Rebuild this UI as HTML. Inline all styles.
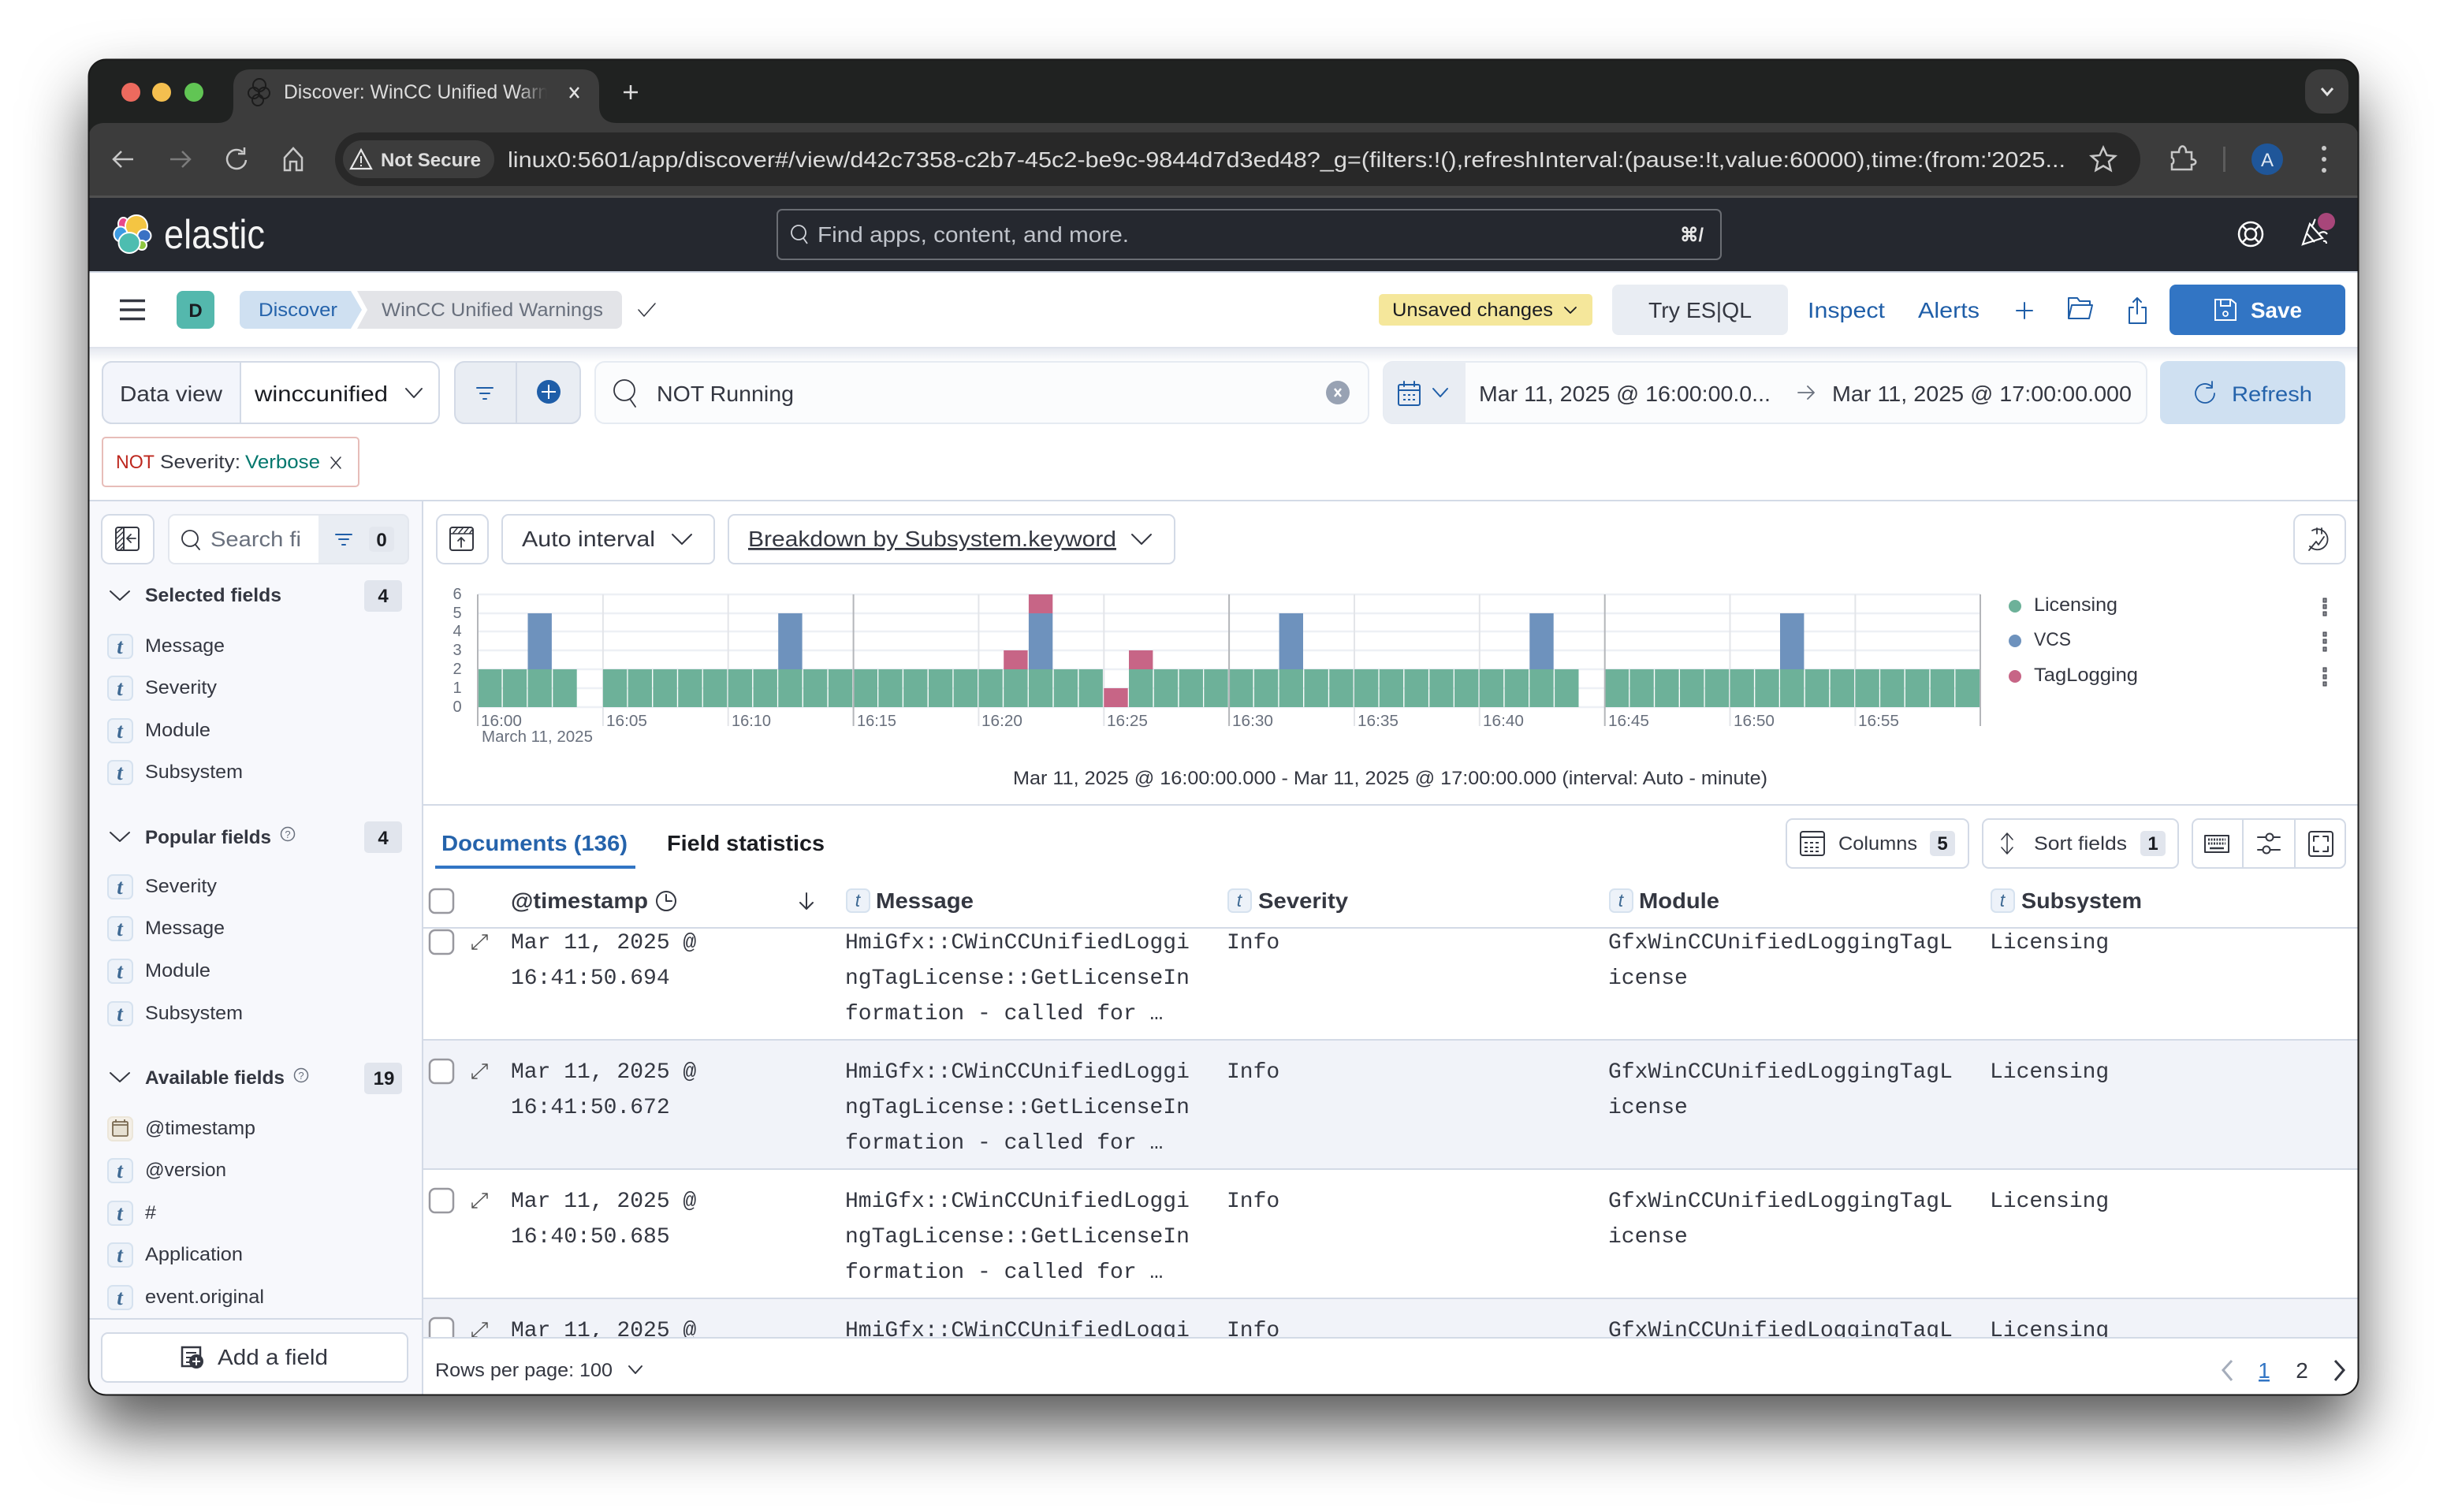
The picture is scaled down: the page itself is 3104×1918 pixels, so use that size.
<!DOCTYPE html>
<html><head><meta charset="utf-8"><title>Discover: WinCC Unified Warnings</title>
<style>
html,body{margin:0;padding:0;background:#fff;width:3104px;height:1918px;overflow:hidden}
#w{position:absolute;left:112px;top:75px;width:2880px;height:1695px;border-radius:22px;box-shadow:0 44px 80px rgba(0,0,0,.65);background:#000}
svg{position:absolute;left:0;top:0}
text{font-family:"Liberation Sans",sans-serif;fill:#343741;font-size:24px}
.m{font-family:"Liberation Mono",monospace;font-size:28px;fill:#343741}
.b{font-weight:700}
.tt{font-family:"Liberation Serif",serif;font-weight:700;font-style:italic;font-size:27px;fill:#3f6a94;text-anchor:middle}
.th{font-family:"Liberation Sans",sans-serif;font-style:italic;font-size:23px;fill:#3f6a94;text-anchor:middle}
.tb{fill:#edf2f9;stroke:#d6e2ef;stroke-width:2}
.ic{fill:none;stroke:#343741;stroke-width:2;stroke-linecap:round;stroke-linejoin:round}
.bl{fill:none;stroke:#1f5ea8;stroke-width:2;stroke-linecap:round;stroke-linejoin:round}
.s15{stroke-width:1.5}
.s18{stroke-width:1.8}
.gr{stroke:#555}
.cb{fill:#fff;stroke:#98989f;stroke-width:2.5}
.btn{fill:#fff;stroke:#d3dae6;stroke-width:2}
</style></head><body>
<div id="w"></div>
<svg width="3104" height="1918" viewBox="0 0 3104 1918" xmlns="http://www.w3.org/2000/svg">
<defs>
<clipPath id="win"><rect x="112" y="75" width="2880" height="1695" rx="22"/></clipPath>
<clipPath id="row4"><rect x="537" y="1648" width="2460" height="49"/></clipPath>
<linearGradient id="sh" x1="0" y1="0" x2="0" y2="1"><stop offset="0" stop-color="#e6e9f0"/><stop offset="1" stop-color="#fff"/></linearGradient>
<linearGradient id="fade" x1="0" y1="0" x2="1" y2="0"><stop offset="0" stop-color="#3c3c3c" stop-opacity="0"/><stop offset="1" stop-color="#3c3c3c"/></linearGradient>
</defs>
<g clip-path="url(#win)">
<rect x="112" y="75" width="2880" height="1695" fill="#fff"/>
<!-- tab strip -->
<rect x="112" y="75" width="2880" height="130" fill="#202221"/>
<path d="M276 156c14 0 20-8 20-22v-24c0-14 8-22 22-22h420c14 0 22 8 22 22v24c0 14 8 22 22 22z" fill="#3c3c3c"/>
<circle cx="166" cy="117" r="12" fill="#ec6a5e"/><circle cx="205" cy="117" r="12" fill="#f4bf4f"/><circle cx="246" cy="117" r="12" fill="#61c554"/>
<g fill="none" stroke="#1c1c1c" stroke-width="2"><circle cx="329" cy="108" r="8"/><circle cx="322" cy="118" r="7"/><circle cx="335" cy="118" r="7"/><circle cx="327" cy="127" r="7"/></g>
<text x="360" y="125" textLength="336" lengthAdjust="spacingAndGlyphs" style="fill:#dcdcdc;font-size:25px">Discover: WinCC Unified Warn</text>
<rect x="656" y="95" width="38" height="45" fill="url(#fade)"/><rect x="694" y="95" width="24" height="45" fill="#3c3c3c"/>
<path d="M723 111l11 13M734 111l-11 13" stroke="#e3e3e3" stroke-width="2.500" fill="none"/>
<path d="M800 108v18M791 117h18" stroke="#dcdcdc" stroke-width="2.500" fill="none"/>
<rect x="2924" y="88" width="55" height="56" rx="20" fill="#3c3c3c"/>
<path d="M2945 112l7 8 7-8" stroke="#e3e3e3" stroke-width="3" fill="none"/>
<!-- toolbar -->
<path d="M112 248v-72c0-12 8-20 20-20h2840c12 0 20 8 20 20v72z" fill="#3c3c3c"/>
<rect x="112" y="248" width="2880" height="3" fill="#505050"/>
<path d="M169 202h-25M154 192l-10 10 10 10" fill="none" stroke="#c8c8c8" stroke-width="2.500"/>
<path d="M216 202h25M231 192l10 10-10 10" fill="none" stroke="#7c7c7c" stroke-width="2.500"/>
<path d="M308 193a12 12 0 1 0 4 10M310 187v8h-8" fill="none" stroke="#c8c8c8" stroke-width="2.500"/>
<path d="M361 216v-16l11-12 11 12v16h-7v-11h-8v11z" fill="none" stroke="#c8c8c8" stroke-width="2.500"/>
<rect x="425" y="168" width="2290" height="68" rx="34" fill="#282828"/>
<rect x="435" y="178" width="192" height="48" rx="24" fill="#3c3c3c"/>
<path d="M458 190l13 24h-26z" fill="none" stroke="#e8e8e8" stroke-width="2.200"/><path d="M458 198v9M458 209v2" stroke="#e8e8e8" stroke-width="2"/>
<text x="483" y="211" class="b" textLength="127" lengthAdjust="spacingAndGlyphs" style="fill:#dedede">Not Secure</text>
<text x="644" y="212" textLength="1976" lengthAdjust="spacingAndGlyphs" style="fill:#dcdcdc;font-size:28px">linux0:5601/app/discover#/view/d42c7358-c2b7-45c2-be9c-9844d7d3ed48?_g=(filters:!(),refreshInterval:(pause:!t,value:60000),time:(from:'2025...</text>
<path d="M2668 187l4.500 10 10.500 1-8 7 2.500 11-9.500-5.500-9.500 5.500 2.500-11-8-7 10.500-1z" fill="none" stroke="#c8c8c8" stroke-width="2.500"/>
<path d="M2755 193h9c0-10 9-10 9 0h7v9c7 0 7 7 0 7v6h-25v-7c3-1 3-7 0-8z" fill="none" stroke="#c8c8c8" stroke-width="2.500"/>
<rect x="2820" y="186" width="3" height="32" fill="#5c5c5c"/>
<circle cx="2876" cy="202" r="20" fill="#1f5699"/>
<text x="2876" y="211" text-anchor="middle" style="fill:#dfe8f3;font-size:24px">A</text>
<circle cx="2948" cy="188" r="3" fill="#c8c8c8"/><circle cx="2948" cy="202" r="3" fill="#c8c8c8"/><circle cx="2948" cy="216" r="3" fill="#c8c8c8"/>
<!-- elastic header -->
<rect x="112" y="251" width="2880" height="93" fill="#25282f"/>
<rect x="112" y="344" width="2880" height="2" fill="#d3dae6"/>
<g stroke="#fff" stroke-width="2">
<ellipse cx="156.500" cy="284" rx="6.500" ry="8" fill="#e8488b"/>
<ellipse cx="173" cy="287" rx="14" ry="14" fill="#f4c542"/>
<ellipse cx="153" cy="297" rx="8.500" ry="9.500" fill="#3d9be3"/>
<ellipse cx="183" cy="299" rx="8.500" ry="8" fill="#3a72c4"/>
<ellipse cx="180" cy="311" rx="6" ry="6" fill="#8fc640"/>
<ellipse cx="164" cy="308" rx="13.500" ry="13" fill="#4dbdb0"/>
</g>
<text x="208" y="315" textLength="128" lengthAdjust="spacingAndGlyphs" style="fill:#f4f4f4;font-size:52px">elastic</text>
<rect x="986" y="266" width="1197" height="63" rx="6" fill="#25282f" stroke="#6a6d73" stroke-width="2"/>
<circle cx="1013" cy="295" r="9" fill="none" stroke="#d0d3d9" stroke-width="1.800"/><path d="M1019 302l5 7" stroke="#d0d3d9" stroke-width="1.800"/>
<text x="1037" y="307" textLength="395" lengthAdjust="spacingAndGlyphs" style="fill:#bfc3ca;font-size:28px">Find apps, content, and more.</text>
<text x="2131" y="306" textLength="30" lengthAdjust="spacingAndGlyphs" style="fill:#e8e8e8;font-size:24px" class="b">⌘/</text>
<g fill="none" stroke="#fff" stroke-width="2.500"><circle cx="2855" cy="297" r="15"/><circle cx="2855" cy="297" r="7"/><path d="M2845 287l5 5M2865 287l-5 5M2845 307l5-5M2865 307l-5-5"/></g>
<g fill="none" stroke="#fff" stroke-width="2.200"><path d="M2921 310l9-26 16 18z"/><path d="M2926 296l10 11M2933 286c3-3 2-6 4-8M2942 296c5-3 8-2 10 1M2947 306c3-1 4 1 4 3"/></g>
<circle cx="2951" cy="281" r="11" fill="#a8467a"/>
<!-- breadcrumb bar -->
<rect x="112" y="346" width="2880" height="94" fill="#fff"/>
<rect x="112" y="440" width="2880" height="2" fill="#dfe3ec"/>
<rect x="112" y="442" width="2880" height="18" fill="url(#sh)"/>
<path d="M152 381.500h32M152 393h32M152 404.500h32" stroke="#343741" stroke-width="3.500"/>
<rect x="224" y="369" width="48" height="48" rx="8" fill="#54b8ad"/>
<text x="248" y="402" text-anchor="middle" class="b" style="fill:#1a1c21;font-size:24px">D</text>
<path d="M312 369h133l14 24-14 24h-133a8 8 0 0 1-8-8v-32a8 8 0 0 1 8-8z" fill="#cfe0f1"/>
<text x="328" y="401" textLength="100" lengthAdjust="spacingAndGlyphs" style="fill:#2563ab;font-size:24px">Discover</text>
<path d="M453 369h328a8 8 0 0 1 8 8v32a8 8 0 0 1-8 8h-328l13-24z" fill="#e3e4e8"/>
<text x="484" y="401" textLength="281" lengthAdjust="spacingAndGlyphs" style="fill:#69707d;font-size:24px">WinCC Unified Warnings</text>
<path d="M810 393l7 8 14-16" class="ic s15"/>
<rect x="1749" y="373" width="271" height="40" rx="5" fill="#f5e79b"/>
<text x="1766" y="401" textLength="204" lengthAdjust="spacingAndGlyphs" style="fill:#1a1c21;font-size:24px">Unsaved changes</text>
<path d="M1985 390l7 7 7-7" class="ic s18" style="stroke:#1a1c21"/>
<rect x="2045" y="361" width="223" height="64" rx="8" fill="#e9edf3"/>
<text x="2091" y="403" textLength="131" lengthAdjust="spacingAndGlyphs" style="font-size:28px">Try ES|QL</text>
<text x="2293" y="403" textLength="98" lengthAdjust="spacingAndGlyphs" style="fill:#1f5ea8;font-size:28px">Inspect</text>
<text x="2433" y="403" textLength="78" lengthAdjust="spacingAndGlyphs" style="fill:#1f5ea8;font-size:28px">Alerts</text>
<path d="M2568 384v20M2558 394h20" class="bl"/>
<path d="M2624 404v-26h11l3 4h13v5M2624 404l4-17h26l-4 17z" class="bl"/>
<path d="M2711 378v20M2706 383l5-5 5 5M2706 390h-5v20h21v-20h-5" class="bl"/>
<rect x="2752" y="361" width="223" height="64" rx="8" fill="#3275c4"/>
<path d="M2810 380h20l6 5v21h-26zM2817 380v8h12v-8" fill="none" stroke="#fff" stroke-width="2"/><circle cx="2823" cy="398" r="3" fill="none" stroke="#fff" stroke-width="1.800"/>
<text x="2855" y="403" class="b" textLength="65" lengthAdjust="spacingAndGlyphs" style="fill:#fff;font-size:28px">Save</text>
<!-- search row -->
<rect x="130" y="459" width="427" height="78" rx="12" class="btn"/>
<path d="M142 459h163v78h-163a12 12 0 0 1-12-12v-54a12 12 0 0 1 12-12z" fill="#f3f5fb" stroke="#d3dae6" stroke-width="2"/>
<text x="152" y="509" textLength="130" lengthAdjust="spacingAndGlyphs" style="font-size:28px">Data view</text>
<text x="323" y="509" textLength="169" lengthAdjust="spacingAndGlyphs" style="fill:#1a1c21;font-size:28px">winccunified</text>
<path d="M515 493l10 11 10-11" class="ic"/>
<rect x="577" y="459" width="159" height="78" rx="12" fill="#e9edf3" stroke="#d3dae6" stroke-width="2"/>
<rect x="654" y="459" width="2" height="78" fill="#d3dae6"/>
<path d="M605 492h20M609 499h12M613 506h4" class="bl"/>
<circle cx="696" cy="497" r="15" fill="#1f5ea8"/><path d="M696 488v18M687 497h18" stroke="#fff" stroke-width="2"/>
<rect x="755" y="459" width="981" height="78" rx="12" fill="#fbfcfd" stroke="#e6ebf2" stroke-width="2"/>
<circle cx="792" cy="495" r="13" fill="none" stroke="#343741" stroke-width="1.800"/><path d="M799 506l7 10" class="ic s18"/>
<text x="833" y="509" textLength="174" lengthAdjust="spacingAndGlyphs" style="font-size:28px">NOT Running</text>
<circle cx="1697" cy="498" r="15" fill="#98a2b3"/><path d="M1693 493l8 10M1701 493l-8 10" stroke="#fff" stroke-width="2.500"/>
<rect x="1755" y="459" width="968" height="78" rx="12" fill="#fbfcfd" stroke="#e6ebf2" stroke-width="2"/>
<path d="M1767 459h92v78h-92a12 12 0 0 1-12-12v-54a12 12 0 0 1 12-12z" fill="#e9edf3"/>
<rect x="1774" y="488" width="27" height="26" rx="2" class="bl"/><path d="M1774 495h27M1781 484v6M1794 484v6" class="bl"/><path d="M1780 501h15M1780 507h15" class="bl" stroke-dasharray="3 3" style="stroke-linecap:butt"/>
<path d="M1818 493l9 10 9-10" class="bl"/>
<text x="1876" y="509" textLength="370" lengthAdjust="spacingAndGlyphs" style="font-size:28px">Mar 11, 2025 @ 16:00:00.0...</text>
<path d="M2281 498h20M2293 490l8 8-8 8" class="ic s18" style="stroke:#69707d"/>
<text x="2324" y="509" textLength="380" lengthAdjust="spacingAndGlyphs" style="font-size:28px">Mar 11, 2025 @ 17:00:00.000</text>
<rect x="2740" y="458" width="235" height="80" rx="10" fill="#cfe0f1"/>
<path d="M2805 490a12 12 0 1 0 4 9M2806 484v8h-7" class="bl s18"/>
<text x="2831" y="509" textLength="102" lengthAdjust="spacingAndGlyphs" style="fill:#2563ab;font-size:27px">Refresh</text>
<!-- filter pill -->
<rect x="130" y="555" width="325" height="62" rx="4" fill="#fff" stroke="#e7bdb9" stroke-width="2"/>
<text x="147" y="594" textLength="49" lengthAdjust="spacingAndGlyphs" style="fill:#bd271e">NOT</text>
<text x="203" y="594" textLength="102" lengthAdjust="spacingAndGlyphs">Severity:</text>
<text x="311" y="594" textLength="95" lengthAdjust="spacingAndGlyphs" style="fill:#01776d">Verbose</text>
<path d="M420 580l12 14M432 580l-12 14" class="ic s15"/>
<rect x="112" y="634" width="2880" height="2" fill="#d3dae6"/>
<!-- sidebar -->
<rect x="112" y="636" width="423" height="1134" fill="#f7f8fc"/>
<rect x="535" y="636" width="2" height="1134" fill="#d3dae6"/>
<rect x="129" y="653" width="66" height="62" rx="10" class="btn"/>
<rect x="147" y="669" width="29" height="29" rx="3" class="ic"/><path d="M157 669v29" class="ic"/><path d="M148 676l8-7M148 683l9-9M148 690l9-9M148 697l9-9M152 698l5-5" class="ic s15"/><path d="M172 683h-11M166 678l-5 5 5 5" class="ic s18"/>
<rect x="214" y="653" width="304" height="62" rx="8" fill="#e9edf3" stroke="#e3e7ee" stroke-width="2"/>
<path d="M404 654h-182a7 7 0 0 0-7 7v46a7 7 0 0 0 7 7h182z" fill="#fff"/>
<circle cx="241" cy="683" r="10" fill="none" stroke="#343741" stroke-width="1.800"/><path d="M248 691l5 6" class="ic s18"/>
<text x="267" y="693" textLength="115" lengthAdjust="spacingAndGlyphs" style="fill:#69707d;font-size:27px">Search fi</text>
<path d="M426 678h20M430 684h12M434 691h4" class="bl"/>
<rect x="468" y="668" width="32" height="32" rx="5" fill="#e3e7ee"/>
<text x="484" y="693" text-anchor="middle" class="b" style="fill:#1a1c21">0</text>
<!-- selected -->
<path d="M140 750l12 11 12-11" class="ic"/>
<text x="184" y="763" class="b" textLength="173" lengthAdjust="spacingAndGlyphs">Selected fields</text>
<rect x="462" y="736" width="48" height="40" rx="5" fill="#e1e5ed"/><text x="486" y="764" text-anchor="middle" class="b" style="fill:#1a1c21">4</text>
<rect x="137" y="805" width="31" height="30" rx="6" class="tb"/><text x="152" y="829" class="tt">t</text><text x="184" y="827" textLength="101" lengthAdjust="spacingAndGlyphs">Message</text>
<rect x="137" y="858" width="31" height="30" rx="6" class="tb"/><text x="152" y="882" class="tt">t</text><text x="184" y="880" textLength="91" lengthAdjust="spacingAndGlyphs">Severity</text>
<rect x="137" y="912" width="31" height="30" rx="6" class="tb"/><text x="152" y="936" class="tt">t</text><text x="184" y="934" textLength="83" lengthAdjust="spacingAndGlyphs">Module</text>
<rect x="137" y="965" width="31" height="30" rx="6" class="tb"/><text x="152" y="989" class="tt">t</text><text x="184" y="987" textLength="124" lengthAdjust="spacingAndGlyphs">Subsystem</text>
<!-- popular -->
<path d="M140 1056l12 11 12-11" class="ic"/>
<text x="184" y="1070" class="b" textLength="160" lengthAdjust="spacingAndGlyphs">Popular fields</text>
<circle cx="365" cy="1058" r="8.500" fill="none" stroke="#69707d" stroke-width="1.500"/><text x="365" y="1063" text-anchor="middle" style="fill:#69707d;font-size:13px">?</text>
<rect x="462" y="1042" width="48" height="40" rx="5" fill="#e1e5ed"/><text x="486" y="1071" text-anchor="middle" class="b" style="fill:#1a1c21">4</text>
<rect x="137" y="1110" width="31" height="30" rx="6" class="tb"/><text x="152" y="1134" class="tt">t</text><text x="184" y="1132" textLength="91" lengthAdjust="spacingAndGlyphs">Severity</text>
<rect x="137" y="1163" width="31" height="30" rx="6" class="tb"/><text x="152" y="1187" class="tt">t</text><text x="184" y="1185" textLength="101" lengthAdjust="spacingAndGlyphs">Message</text>
<rect x="137" y="1217" width="31" height="30" rx="6" class="tb"/><text x="152" y="1241" class="tt">t</text><text x="184" y="1239" textLength="83" lengthAdjust="spacingAndGlyphs">Module</text>
<rect x="137" y="1271" width="31" height="30" rx="6" class="tb"/><text x="152" y="1295" class="tt">t</text><text x="184" y="1293" textLength="124" lengthAdjust="spacingAndGlyphs">Subsystem</text>
<!-- available -->
<path d="M140 1361l12 11 12-11" class="ic"/>
<text x="184" y="1375" class="b" textLength="177" lengthAdjust="spacingAndGlyphs">Available fields</text>
<circle cx="382" cy="1364" r="8.500" fill="none" stroke="#69707d" stroke-width="1.500"/><text x="382" y="1369" text-anchor="middle" style="fill:#69707d;font-size:13px">?</text>
<rect x="462" y="1348" width="48" height="40" rx="5" fill="#e1e5ed"/><text x="487" y="1376" text-anchor="middle" class="b" style="fill:#1a1c21">19</text>
<rect x="137" y="1417" width="31" height="30" rx="6" fill="#f4efe6" stroke="#ece6d9" stroke-width="2"/>
<rect x="143" y="1423" width="19" height="18" rx="1.500" fill="#e6e0d2" stroke="#7a6a52" stroke-width="1.800"/><path d="M143 1427h19M147 1420v4M158 1420v4" stroke="#7a6a52" stroke-width="1.800"/>
<text x="184" y="1439" textLength="140" lengthAdjust="spacingAndGlyphs">@timestamp</text>
<rect x="137" y="1470" width="31" height="30" rx="6" class="tb"/><text x="152" y="1494" class="tt">t</text><text x="184" y="1492" textLength="103" lengthAdjust="spacingAndGlyphs">@version</text>
<rect x="137" y="1524" width="31" height="30" rx="6" class="tb"/><text x="152" y="1548" class="tt">t</text><text x="184" y="1546" textLength="14" lengthAdjust="spacingAndGlyphs">#</text>
<rect x="137" y="1577" width="31" height="30" rx="6" class="tb"/><text x="152" y="1601" class="tt">t</text><text x="184" y="1599" textLength="124" lengthAdjust="spacingAndGlyphs">Application</text>
<rect x="137" y="1631" width="31" height="30" rx="6" class="tb"/><text x="152" y="1655" class="tt">t</text><text x="184" y="1653" textLength="151" lengthAdjust="spacingAndGlyphs">event.original</text>
<rect x="112" y="1672" width="423" height="2" fill="#d3dae6"/>
<rect x="129" y="1691" width="388" height="62" rx="8" class="btn"/>
<rect x="231" y="1709" width="23" height="24" fill="none" stroke="#343741" stroke-width="2.500"/><path d="M236 1716h13M236 1722h9M236 1728h5" stroke="#343741" stroke-width="2"/>
<circle cx="249" cy="1727" r="9" fill="#343741"/><path d="M249 1722v10M244 1727h10" stroke="#fff" stroke-width="2"/>
<text x="276" y="1731" textLength="140" lengthAdjust="spacingAndGlyphs" style="font-size:28px">Add a field</text>
<!-- chart controls -->
<rect x="554" y="653" width="65" height="62" rx="10" class="btn"/>
<rect x="571" y="669" width="29" height="29" rx="3" class="ic"/><path d="M571 677h29M575 676l5-6M582 676l5-6M589 676l5-6M596 676l3-4" class="ic s15"/><path d="M585 694v-12M581 686l4-4 4 4" class="ic s18"/>
<rect x="637" y="653" width="269" height="62" rx="8" class="btn"/>
<text x="662" y="693" textLength="169" lengthAdjust="spacingAndGlyphs" style="font-size:28px">Auto interval</text>
<path d="M853 678l12 12 12-12" class="ic"/>
<rect x="924" y="653" width="566" height="62" rx="8" class="btn"/>
<text x="949" y="693" textLength="467" lengthAdjust="spacingAndGlyphs" text-decoration="underline" style="font-size:28px">Breakdown by Subsystem.keyword</text>
<path d="M1436 678l12 12 12-12" class="ic"/>
<rect x="2910" y="653" width="65" height="62" rx="10" class="btn"/>
<path d="M2933 673a13 13 0 1 1 -3 20M2939 670v7M2945 670v7" class="ic s18"/><path d="M2929 698l9-11 3 4 7-10" class="ic s18"/>
<!-- chart grid -->
<g stroke="#edf0f5" stroke-width="2.500"><path d="M606 754H2512M606 778H2512M606 801H2512M606 825H2512M606 849H2512M606 873H2512M606 897H2512"/></g>
<g stroke="#e3e5e9" stroke-width="2"><path d="M764.900 754V921M923.700 754V921M1241.400 754V921M1400.300 754V921M1718 754V921M1876.800 754V921M2194.500 754V921M2353.400 754V921"/></g>
<g fill="#6db199"><path d="M606 849h30.400v48h-30.400zM637.800 849h30.400v48h-30.400zM669.500 849h30.400v48h-30.400zM701.300 849h30.400v48h-30.400zM764.900 849h30.400v48h-30.400zM796.600 849h30.400v48h-30.400zM828.400 849h30.400v48h-30.400zM860.200 849h30.400v48h-30.400zM891.900 849h30.400v48h-30.400zM923.700 849h30.400v48h-30.400zM955.500 849h30.400v48h-30.400zM987.200 849h30.400v48h-30.400zM1019 849h30.400v48h-30.400zM1050.800 849h30.400v48h-30.400zM1082.600 849h30.400v48h-30.400zM1114.300 849h30.400v48h-30.400zM1146.100 849h30.400v48h-30.400zM1177.900 849h30.400v48h-30.400zM1209.600 849h30.400v48h-30.400zM1241.400 849h30.400v48h-30.400zM1273.200 849h30.400v48h-30.400zM1304.900 849h30.400v48h-30.400zM1336.700 849h30.400v48h-30.400zM1368.500 849h30.400v48h-30.400zM1432 849h30.400v48h-30.400zM1463.800 849h30.400v48h-30.400zM1495.600 849h30.400v48h-30.400zM1527.300 849h30.400v48h-30.400zM1559.100 849h30.400v48h-30.400zM1590.900 849h30.400v48h-30.400zM1622.600 849h30.400v48h-30.400zM1654.400 849h30.400v48h-30.400zM1686.200 849h30.400v48h-30.400zM1718 849h30.400v48h-30.400zM1749.700 849h30.400v48h-30.400zM1781.500 849h30.400v48h-30.400zM1813.300 849h30.400v48h-30.400zM1845 849h30.400v48h-30.400zM1876.800 849h30.400v48h-30.400zM1908.600 849h30.400v48h-30.400zM1940.300 849h30.400v48h-30.400zM1972.100 849h30.400v48h-30.400zM2035.700 849h30.400v48h-30.400zM2067.400 849h30.400v48h-30.400zM2099.200 849h30.400v48h-30.400zM2131 849h30.400v48h-30.400zM2162.700 849h30.400v48h-30.400zM2194.500 849h30.400v48h-30.400zM2226.300 849h30.400v48h-30.400zM2258 849h30.400v48h-30.400zM2289.800 849h30.400v48h-30.400zM2321.600 849h30.400v48h-30.400zM2353.400 849h30.400v48h-30.400zM2385.100 849h30.400v48h-30.400zM2416.900 849h30.400v48h-30.400zM2448.700 849h30.400v48h-30.400zM2480.400 849h31.600v48h-31.600z"/></g>
<g fill="#6e92bd"><rect x="669.500" y="778" width="30.400" height="71"/><rect x="987.200" y="778" width="30.400" height="71"/><rect x="1304.900" y="778" width="30.400" height="71"/><rect x="1622.600" y="778" width="30.400" height="71"/><rect x="1940.300" y="778" width="30.400" height="71"/><rect x="2258" y="778" width="30.400" height="71"/></g>
<g fill="#c76586"><rect x="1273.200" y="825" width="30.400" height="24"/><rect x="1304.900" y="754" width="30.400" height="24"/><rect x="1400.300" y="873" width="30.400" height="24"/><rect x="1432" y="825" width="30.400" height="24"/></g>
<g stroke="#b4b6ba" stroke-width="2"><path d="M606 754V921M1082.600 754V921M1559.100 754V921M2035.700 754V921M2512 754V921"/></g>
<text x="580" y="760" text-anchor="middle" style="fill:#69707d;font-size:20px">6</text>
<text x="580" y="784" text-anchor="middle" style="fill:#69707d;font-size:20px">5</text>
<text x="580" y="807" text-anchor="middle" style="fill:#69707d;font-size:20px">4</text>
<text x="580" y="831" text-anchor="middle" style="fill:#69707d;font-size:20px">3</text>
<text x="580" y="855" text-anchor="middle" style="fill:#69707d;font-size:20px">2</text>
<text x="580" y="879" text-anchor="middle" style="fill:#69707d;font-size:20px">1</text>
<text x="580" y="903" text-anchor="middle" style="fill:#69707d;font-size:20px">0</text>
<text x="610" y="921" textLength="52" lengthAdjust="spacingAndGlyphs" style="fill:#69707d;font-size:20px">16:00</text>
<text x="769" y="921" textLength="52" lengthAdjust="spacingAndGlyphs" style="fill:#69707d;font-size:20px">16:05</text>
<text x="928" y="921" textLength="50" lengthAdjust="spacingAndGlyphs" style="fill:#69707d;font-size:20px">16:10</text>
<text x="1087" y="921" textLength="50" lengthAdjust="spacingAndGlyphs" style="fill:#69707d;font-size:20px">16:15</text>
<text x="1245" y="921" textLength="52" lengthAdjust="spacingAndGlyphs" style="fill:#69707d;font-size:20px">16:20</text>
<text x="1404" y="921" textLength="52" lengthAdjust="spacingAndGlyphs" style="fill:#69707d;font-size:20px">16:25</text>
<text x="1563" y="921" textLength="52" lengthAdjust="spacingAndGlyphs" style="fill:#69707d;font-size:20px">16:30</text>
<text x="1722" y="921" textLength="52" lengthAdjust="spacingAndGlyphs" style="fill:#69707d;font-size:20px">16:35</text>
<text x="1881" y="921" textLength="52" lengthAdjust="spacingAndGlyphs" style="fill:#69707d;font-size:20px">16:40</text>
<text x="2040" y="921" textLength="52" lengthAdjust="spacingAndGlyphs" style="fill:#69707d;font-size:20px">16:45</text>
<text x="2199" y="921" textLength="52" lengthAdjust="spacingAndGlyphs" style="fill:#69707d;font-size:20px">16:50</text>
<text x="2357" y="921" textLength="52" lengthAdjust="spacingAndGlyphs" style="fill:#69707d;font-size:20px">16:55</text>
<text x="611" y="941" textLength="141" lengthAdjust="spacingAndGlyphs" style="fill:#69707d;font-size:20px">March 11, 2025</text>
<circle cx="2556" cy="769" r="8" fill="#6db199"/><text x="2580" y="775" textLength="106" lengthAdjust="spacingAndGlyphs">Licensing</text>
<circle cx="2556" cy="813" r="8" fill="#6e92bd"/><text x="2580" y="819" textLength="47" lengthAdjust="spacingAndGlyphs">VCS</text>
<circle cx="2556" cy="858" r="8" fill="#c76586"/><text x="2580" y="864" textLength="132" lengthAdjust="spacingAndGlyphs">TagLogging</text>
<g fill="#8a8c92" stroke="#343741" stroke-width="1"><rect x="2947" y="759" width="4" height="5"/><rect x="2947" y="767" width="4" height="5"/><rect x="2947" y="776" width="4" height="5"/><rect x="2947" y="802" width="4" height="5"/><rect x="2947" y="811" width="4" height="5"/><rect x="2947" y="821" width="4" height="5"/><rect x="2947" y="847" width="4" height="5"/><rect x="2947" y="856" width="4" height="5"/><rect x="2947" y="865" width="4" height="5"/></g>
<text x="1285" y="995" textLength="957" lengthAdjust="spacingAndGlyphs">Mar 11, 2025 @ 16:00:00.000 - Mar 11, 2025 @ 17:00:00.000 (interval: Auto - minute)</text>
<rect x="537" y="1020" width="2455" height="2" fill="#d3dae6"/>
<!-- tabs -->
<text x="560" y="1079" class="b" textLength="236" lengthAdjust="spacingAndGlyphs" style="fill:#2563ab;font-size:28px">Documents (136)</text>
<rect x="552" y="1098" width="254" height="4" fill="#3275c4"/>
<text x="846" y="1079" class="b" textLength="200" lengthAdjust="spacingAndGlyphs" style="fill:#1a1c21;font-size:28px">Field statistics</text>
<rect x="2266" y="1039" width="231" height="62" rx="8" class="btn"/>
<rect x="2284" y="1055" width="30" height="30" rx="3" class="ic"/><path d="M2284 1062h30" class="ic"/><path d="M2289 1069h20M2289 1075h20M2289 1080h20" class="ic" stroke-dasharray="4 3" style="stroke-linecap:butt"/>
<text x="2332" y="1078" textLength="100" lengthAdjust="spacingAndGlyphs">Columns</text>
<rect x="2448" y="1054" width="32" height="32" rx="5" fill="#e1e5ed"/><text x="2464" y="1078" text-anchor="middle" class="b" style="fill:#1a1c21">5</text>
<rect x="2515" y="1039" width="248" height="62" rx="8" class="btn"/>
<path d="M2546 1058v24M2539 1065l7-8 7 8M2539 1075l7 8 7-8" class="ic s15"/>
<text x="2580" y="1078" textLength="118" lengthAdjust="spacingAndGlyphs">Sort fields</text>
<rect x="2715" y="1054" width="32" height="32" rx="5" fill="#e1e5ed"/><text x="2731" y="1078" text-anchor="middle" class="b" style="fill:#1a1c21">1</text>
<rect x="2781" y="1039" width="194" height="62" rx="8" class="btn"/>
<path d="M2845 1039v62M2911 1039v62" stroke="#d3dae6" stroke-width="2"/>
<rect x="2797" y="1060" width="30" height="21" class="ic"/><path d="M2801 1065h22M2801 1070h22" stroke="#343741" stroke-width="3" stroke-dasharray="2 1.500"/><path d="M2803 1076h18" stroke="#343741" stroke-width="2.500"/>
<path d="M2864 1062h10M2884 1062h8M2864 1078h6M2880 1078h12" class="ic"/><circle cx="2879" cy="1062" r="4.500" class="ic"/><circle cx="2875" cy="1078" r="4.500" class="ic"/>
<rect x="2929" y="1055" width="30" height="31" rx="3" class="ic"/><path d="M2935 1067v-6h6M2947 1061h6v6M2953 1074v6h-6M2941 1080h-6v-6" class="ic"/>
<!-- table header -->
<rect x="545" y="1128" width="30" height="30" rx="7" class="cb"/>
<text x="648" y="1152" class="b" textLength="174" lengthAdjust="spacingAndGlyphs" style="font-size:28px">@timestamp</text>
<circle cx="845" cy="1143" r="12" class="ic"/><path d="M845 1135v8h7" class="ic"/>
<path d="M1023 1133v20M1015 1145l8 8 8-8" class="ic"/>
<rect x="1074" y="1128" width="29" height="29" rx="6" class="tb"/><text x="1088" y="1150" class="th">t</text>
<text x="1111" y="1152" class="b" textLength="124" lengthAdjust="spacingAndGlyphs" style="font-size:28px">Message</text>
<rect x="1558" y="1128" width="29" height="29" rx="6" class="tb"/><text x="1572" y="1150" class="th">t</text>
<text x="1596" y="1152" class="b" textLength="114" lengthAdjust="spacingAndGlyphs" style="font-size:28px">Severity</text>
<rect x="2042" y="1128" width="29" height="29" rx="6" class="tb"/><text x="2056" y="1150" class="th">t</text>
<text x="2079" y="1152" class="b" textLength="102" lengthAdjust="spacingAndGlyphs" style="font-size:28px">Module</text>
<rect x="2526" y="1128" width="29" height="29" rx="6" class="tb"/><text x="2540" y="1150" class="th">t</text>
<text x="2564" y="1152" class="b" textLength="153" lengthAdjust="spacingAndGlyphs" style="font-size:28px">Subsystem</text>
<rect x="537" y="1176" width="2455" height="2" fill="#d3dae6"/>
<!-- row 1 -->
<rect x="545" y="1180" width="30" height="30" rx="7" class="cb"/>
<path d="M599 1204l19-18M612 1186h6v6M599 1198v6h6" class="ic s15 gr"/>
<text class="m" x="648" y="1203">Mar 11, 2025 @</text><text class="m" x="648" y="1248">16:41:50.694</text>
<text class="m" x="1072" y="1203">HmiGfx::CWinCCUnifiedLoggi</text><text class="m" x="1072" y="1248">ngTagLicense::GetLicenseIn</text><text class="m" x="1072" y="1293">formation - called for …</text>
<text class="m" x="1556" y="1203">Info</text>
<text class="m" x="2040" y="1203">GfxWinCCUnifiedLoggingTagL</text><text class="m" x="2040" y="1248">icense</text>
<text class="m" x="2524" y="1203">Licensing</text>
<rect x="537" y="1318" width="2455" height="2" fill="#d3dae6"/>
<!-- row 2 -->
<rect x="537" y="1320" width="2455" height="162" fill="#f1f3f9"/>
<rect x="545" y="1344" width="30" height="30" rx="7" class="cb"/>
<path d="M599 1368l19-18M612 1350h6v6M599 1362v6h6" class="ic s15 gr"/>
<text class="m" x="648" y="1367">Mar 11, 2025 @</text><text class="m" x="648" y="1412">16:41:50.672</text>
<text class="m" x="1072" y="1367">HmiGfx::CWinCCUnifiedLoggi</text><text class="m" x="1072" y="1412">ngTagLicense::GetLicenseIn</text><text class="m" x="1072" y="1457">formation - called for …</text>
<text class="m" x="1556" y="1367">Info</text>
<text class="m" x="2040" y="1367">GfxWinCCUnifiedLoggingTagL</text><text class="m" x="2040" y="1412">icense</text>
<text class="m" x="2524" y="1367">Licensing</text>
<rect x="537" y="1482" width="2455" height="2" fill="#d3dae6"/>
<!-- row 3 -->
<rect x="545" y="1508" width="30" height="30" rx="7" class="cb"/>
<path d="M599 1532l19-18M612 1514h6v6M599 1526v6h6" class="ic s15 gr"/>
<text class="m" x="648" y="1531">Mar 11, 2025 @</text><text class="m" x="648" y="1576">16:40:50.685</text>
<text class="m" x="1072" y="1531">HmiGfx::CWinCCUnifiedLoggi</text><text class="m" x="1072" y="1576">ngTagLicense::GetLicenseIn</text><text class="m" x="1072" y="1621">formation - called for …</text>
<text class="m" x="1556" y="1531">Info</text>
<text class="m" x="2040" y="1531">GfxWinCCUnifiedLoggingTagL</text><text class="m" x="2040" y="1576">icense</text>
<text class="m" x="2524" y="1531">Licensing</text>
<rect x="537" y="1646" width="2455" height="2" fill="#d3dae6"/>
<!-- row 4 -->
<rect x="537" y="1648" width="2455" height="49" fill="#f1f3f9"/>
<g clip-path="url(#row4)">
<rect x="545" y="1672" width="30" height="30" rx="7" class="cb"/>
<path d="M599 1696l19-18M612 1678h6v6M599 1690v6h6" class="ic s15 gr"/>
<text class="m" x="648" y="1695">Mar 11, 2025 @</text>
<text class="m" x="1072" y="1695">HmiGfx::CWinCCUnifiedLoggi</text>
<text class="m" x="1556" y="1695">Info</text>
<text class="m" x="2040" y="1695">GfxWinCCUnifiedLoggingTagL</text>
<text class="m" x="2524" y="1695">Licensing</text>
</g>
<rect x="537" y="1696" width="2455" height="2" fill="#d3dae6"/>
<!-- footer -->
<text x="552" y="1746" textLength="225" lengthAdjust="spacingAndGlyphs">Rows per page: 100</text>
<path d="M798 1733l8 9 8-9" class="ic"/>
<path d="M2831 1726l-11 12 11 13" fill="none" stroke="#a5adbb" stroke-width="3"/>
<text x="2872" y="1748" text-anchor="middle" style="fill:#3275c4;font-size:28px">1</text><rect x="2865" y="1750" width="14" height="2.500" fill="#3275c4"/>
<text x="2920" y="1748" text-anchor="middle" style="font-size:28px">2</text>
<path d="M2962 1726l11 12-11 13" fill="none" stroke="#343741" stroke-width="3"/>
</g>
<rect x="112.500" y="75.500" width="2879" height="1694" rx="22" fill="none" stroke="#1a1a1a" stroke-width="2"/>
</svg>
</body></html>
